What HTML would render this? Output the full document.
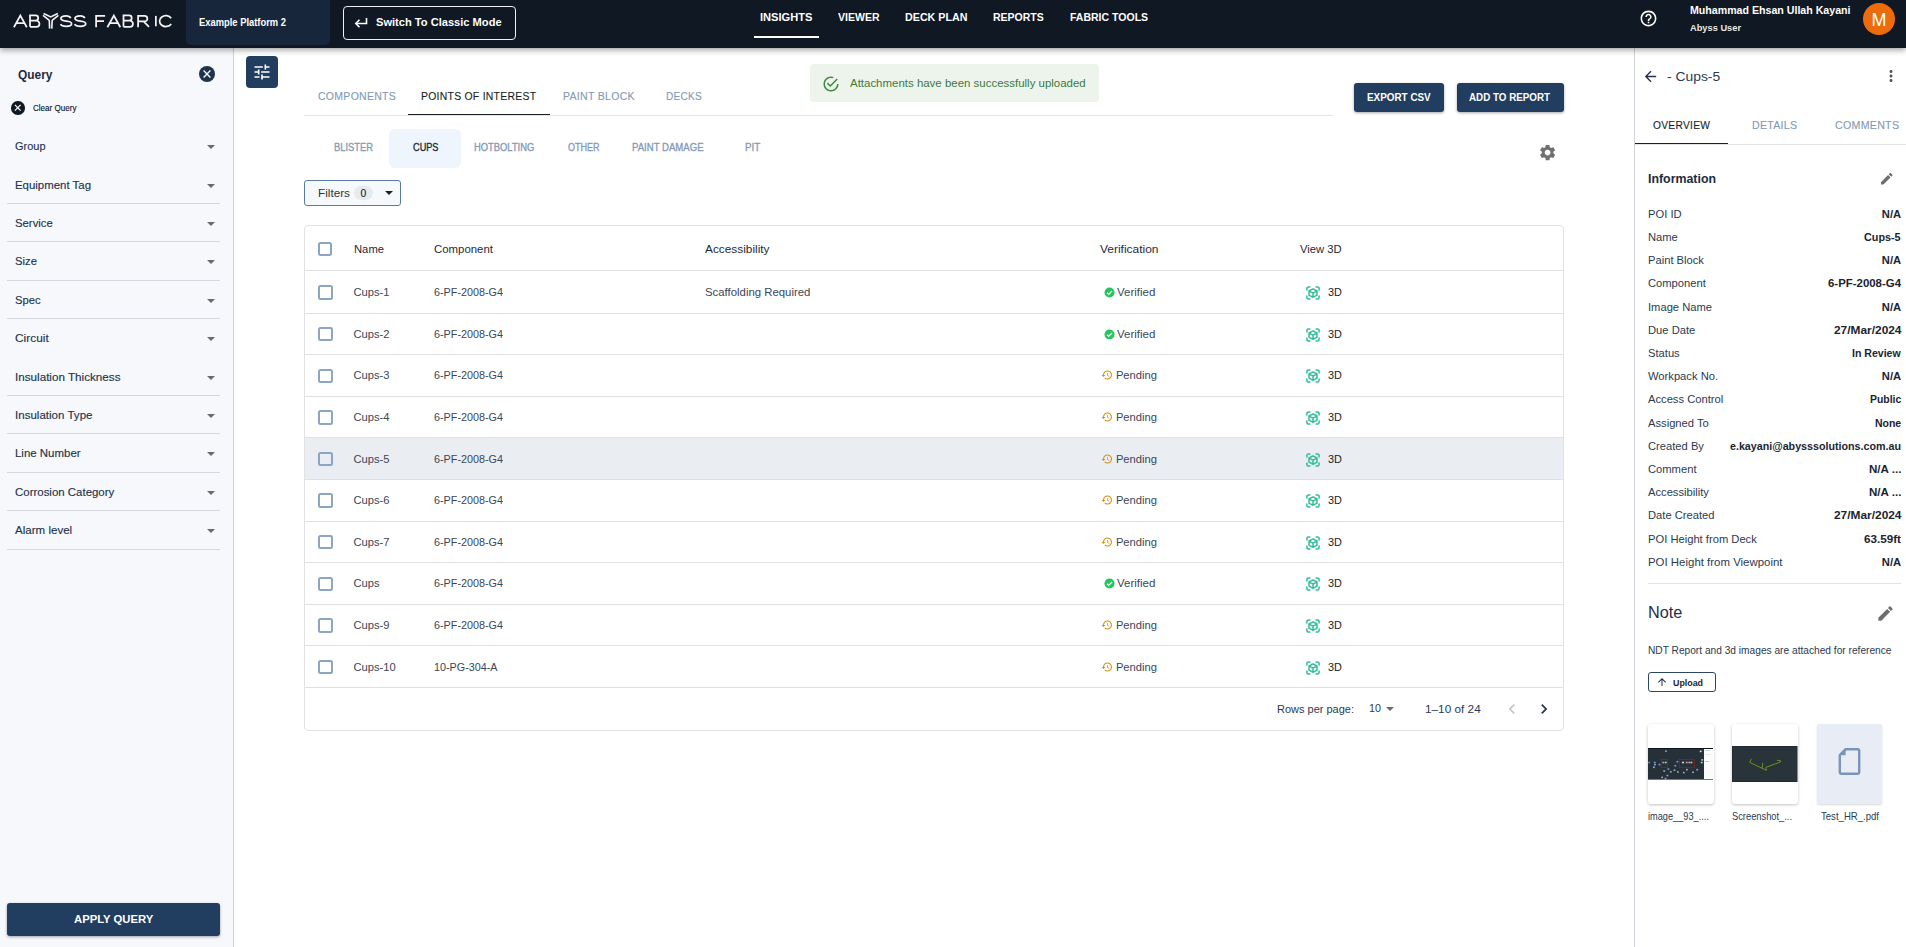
<!DOCTYPE html>
<html><head><meta charset="utf-8"><title>Abyss Fabric</title>
<style>
*{box-sizing:border-box;margin:0;padding:0}
html,body{width:1906px;height:947px;overflow:hidden;background:#fff;font-family:"Liberation Sans",sans-serif;position:relative}
.a{position:absolute;white-space:nowrap}
.b{position:absolute}
.cb{position:absolute;width:14.4px;height:14.4px;border:2px solid #8ca5c5;border-radius:2.5px;background:transparent}
.dd{position:absolute;width:0;height:0;border-left:4px solid transparent;border-right:4px solid transparent;border-top:4px solid #6b6b6b}
.hl{position:absolute;height:1px;background:#e0e0e0}

</style></head><body>
<div class='b' style='left:0;top:0;width:1906px;height:48px;background:#101823;box-shadow:0 2px 6px rgba(0,0,0,.38);z-index:1'></div>
<div class='b' style='left:186px;top:0;width:144px;height:45px;background:#18263b;border-radius:0 0 5px 5px;z-index:2'></div>
<div class='b' style='left:343px;top:5.5px;width:173px;height:34px;border:1.3px solid #f0f0f0;border-radius:4px;z-index:2'></div>
<div class='b' style='left:754px;top:36px;width:65px;height:2px;background:#fff;z-index:2'></div>
<div class='b' style='left:1863px;top:3px;width:32px;height:32px;border-radius:50%;background:#ec6c0c;z-index:2'></div>
<svg class='b' style='left:1639px;top:9px;z-index:2' width='19' height='19' viewBox='0 0 24 24'><path fill='#fff' d='M11 18h2v-2h-2v2zm1-16C6.48 2 2 6.48 2 12s4.48 10 10 10 10-4.48 10-10S17.52 2 12 2zm0 18c-4.41 0-8-3.59-8-8s3.59-8 8-8 8 3.59 8 8-3.59 8-8 8zm0-14c-2.21 0-4 1.79-4 4h2c0-1.1.9-2 2-2s2 .9 2 2c0 2-3 1.75-3 5h2c0-2.25 3-2.5 3-5 0-2.21-1.79-4-4-4z'/></svg>
<svg class='b' style='left:354px;top:17px;z-index:2' width='14' height='11' viewBox='0 0 14 11'><path d='M12.5 1v5.5H2.5' fill='none' stroke='#fff' stroke-width='1.6'/><path d='M5.5 2.8L1.8 6.5l3.7 3.7' fill='none' stroke='#fff' stroke-width='1.6'/></svg>
<svg class='b' style='left:0;top:0;z-index:3' width='180' height='40' viewBox='0 0 180 40'><g fill='none' stroke='#f4f4f4' stroke-width='1.75' stroke-linejoin='miter'><path d='M13.9 27.2L20.35 15.6L26.8 27.2M16.6 23.1H24.1'/><path d='M30 27.2V15.9H35.6A2.6 2.6 0 0 1 35.6 21.1H30M35.6 21.1H36.4A3.05 3.05 0 0 1 36.4 27.2H30' transform='translate(0 -0.45)'/><path d='M70.8 18C70 16.6 68.4 15.9 66.2 15.9C62.8 15.9 60.9 17 60.9 18.6C60.9 20.4 62.8 20.8 66.2 21.1C69.8 21.4 71.6 22 71.6 23.7C71.6 25.4 69.6 26.3 66.2 26.3C63 26.3 61.3 25.6 60.6 24.2'/><path d='M84.9 18C84.1 16.6 82.5 15.9 80.3 15.9C76.9 15.9 75 17 75 18.6C75 20.4 76.9 20.8 80.3 21.1C83.9 21.4 85.7 22 85.7 23.7C85.7 25.4 83.7 26.3 80.3 26.3C77.1 26.3 75.4 25.6 74.7 24.2'/><path d='M96.1 27.2V15.9H105.1M96.1 21.2H104'/><path d='M107.4 27.2L113.85 15.6L120.3 27.2M110.1 23.1H117.6'/><path d='M123.5 27.2V15.9H129.1A2.6 2.6 0 0 1 129.1 21.1H123.5M129.1 21.1H129.9A3.05 3.05 0 0 1 129.9 27.2H123.5' transform='translate(0 -0.45)'/><path d='M138.1 27.2V15.9H144.6A2.75 2.75 0 0 1 144.6 21.4H138.1M143.6 21.4L149 26.8'/><path d='M155.85 15.9V26.3'/><path d='M171.2 18.2A6.3 5.45 0 1 0 171.2 24'/><path d='M43.6 13.5L50.7 16.9L57.8 13.5' stroke-width='1.6'/><path d='M43 15.4L48.7 19.9Q49.3 20.4 49.3 21.3L49.6 28.6' stroke-width='1.6'/><path d='M58.4 15.4L52.7 19.9Q52.1 20.4 52.1 21.3L51.8 28.6' stroke-width='1.6'/></g></svg>
<div class='b' style='left:0;top:48px;width:233px;height:899px;background:#f6f8fc'></div>
<div class='b' style='left:233px;top:48px;width:1px;height:899px;background:#cfd2d7'></div>
<div class='b' style='left:198.6px;top:66.4px;width:16.1px;height:16.1px;border-radius:50%;background:#1f3350'></div>
<svg class='b' style='left:198.6px;top:66.4px' width='16' height='16' viewBox='0 0 16 16'><path d='M4.6 4.6l6.8 6.8M11.4 4.6l-6.8 6.8' stroke='#fff' stroke-width='1.35'/></svg>
<div class='b' style='left:11.3px;top:101px;width:13.5px;height:13.5px;border-radius:50%;background:#111a24'></div>
<svg class='b' style='left:11.3px;top:101px' width='13.5' height='13.5' viewBox='0 0 16 16'><path d='M4.6 4.6l6.8 6.8M11.4 4.6l-6.8 6.8' stroke='#fff' stroke-width='1.45'/></svg>
<div class='dd' style='left:206.5px;top:144.5px'></div>
<div class='dd' style='left:206.5px;top:183.5px'></div>
<div class='dd' style='left:206.5px;top:221.5px'></div>
<div class='dd' style='left:206.5px;top:259.5px'></div>
<div class='dd' style='left:206.5px;top:298.5px'></div>
<div class='dd' style='left:206.5px;top:336.5px'></div>
<div class='dd' style='left:206.5px;top:375.5px'></div>
<div class='dd' style='left:206.5px;top:413.5px'></div>
<div class='dd' style='left:206.5px;top:451.5px'></div>
<div class='dd' style='left:206.5px;top:490.5px'></div>
<div class='dd' style='left:206.5px;top:528.5px'></div>
<div class='b' style='left:7px;top:203px;width:213px;height:1px;background:#d5d9df'></div>
<div class='b' style='left:7px;top:241px;width:213px;height:1px;background:#d5d9df'></div>
<div class='b' style='left:7px;top:280px;width:213px;height:1px;background:#d5d9df'></div>
<div class='b' style='left:7px;top:318px;width:213px;height:1px;background:#d5d9df'></div>
<div class='b' style='left:7px;top:395px;width:213px;height:1px;background:#d5d9df'></div>
<div class='b' style='left:7px;top:433px;width:213px;height:1px;background:#d5d9df'></div>
<div class='b' style='left:7px;top:472px;width:213px;height:1px;background:#d5d9df'></div>
<div class='b' style='left:7px;top:510px;width:213px;height:1px;background:#d5d9df'></div>
<div class='b' style='left:7px;top:549px;width:213px;height:1px;background:#d5d9df'></div>
<div class='b' style='left:7px;top:903px;width:213px;height:33px;background:#213d5f;border-radius:3px;box-shadow:0 1px 3px rgba(0,0,0,.35)'></div>
<div class='b' style='left:246px;top:56px;width:32px;height:32px;background:#213d5f;border-radius:4px'></div>
<svg class='b' style='left:252px;top:62px' width='20' height='20' viewBox='0 0 24 24'><path fill='#fff' d='M3 17v2h6v-2H3zM3 5v2h10V5H3zm10 16v-2h8v-2h-8v-2h-2v6h2zM7 9v2H3v2h4v2h2V9H7zm14 4v-2H11v2h10zm-6-4h2V7h4V5h-4V3h-2v6z'/></svg>
<div class='b' style='left:304px;top:115px;width:1029px;height:1px;background:#e2e4e7'></div>
<div class='b' style='left:408px;top:113.5px;width:142px;height:1.6px;background:#1a1f26'></div>
<div class='b' style='left:389px;top:129px;width:72px;height:39px;background:#eef5fc;border-radius:6px'></div>
<div class='b' style='left:304px;top:180px;width:97px;height:26px;border:1px solid #5b7aa0;border-radius:3px;background:#f6f9fc'></div>
<div class='b' style='left:354px;top:186px;width:19px;height:14px;border-radius:7px;background:#e6ebf1'></div>
<div class='dd' style='left:384.5px;top:190.5px;border-top-color:#222'></div>
<div class='b' style='left:809.5px;top:64px;width:289px;height:38px;background:#edf4ec;border-radius:4px'></div>
<svg class='b' style='left:822px;top:75px' width='18' height='18' viewBox='0 0 24 24'><path fill='#3b8a3f' d='M20 12c0 4.41-3.59 8-8 8s-8-3.59-8-8 3.59-8 8-8c.76 0 1.5.11 2.2.31l1.57-1.57C14.61 2.26 13.34 2 12 2 6.48 2 2 6.48 2 12s4.48 10 10 10 10-4.48 10-10h-2zM7.91 10.08 6.5 11.5 11 16 21 6l-1.41-1.42L11 13.17l-3.09-3.09z'/></svg>
<div class='b' style='left:1354px;top:83px;width:90px;height:28.5px;background:#213d5f;border-radius:3px;box-shadow:0 1px 3px rgba(0,0,0,.35)'></div>
<div class='b' style='left:1457px;top:83px;width:107px;height:28.5px;background:#213d5f;border-radius:3px;box-shadow:0 1px 3px rgba(0,0,0,.35)'></div>
<svg class='b' style='left:1538px;top:142.8px' width='19.2' height='19.2' viewBox='0 0 24 24'><path fill='#707070' d='M19.14 12.94c.04-.3.06-.61.06-.94 0-.32-.02-.64-.07-.94l2.03-1.58c.18-.14.23-.41.12-.61l-1.92-3.32c-.12-.22-.37-.29-.59-.22l-2.39.96c-.5-.38-1.03-.7-1.62-.94l-.36-2.54c-.04-.24-.24-.41-.48-.41h-3.84c-.24 0-.43.17-.47.41l-.36 2.54c-.59.24-1.13.57-1.62.94l-2.39-.96c-.22-.08-.47 0-.59.22L2.74 8.87c-.12.21-.08.47.12.61l2.03 1.58c-.05.3-.09.63-.09.94s.02.64.07.94l-2.03 1.58c-.18.14-.23.41-.12.61l1.92 3.32c.12.22.37.29.59.22l2.39-.96c.5.38 1.03.7 1.62.94l.36 2.54c.05.24.24.41.48.41h3.84c.24 0 .44-.17.47-.41l.36-2.54c.59-.24 1.13-.56 1.62-.94l2.39.96c.22.08.47 0 .59-.22l1.92-3.32c.12-.22.07-.47-.12-.61l-2.01-1.58zM12 15.6c-1.98 0-3.6-1.62-3.6-3.6s1.62-3.6 3.6-3.6 3.6 1.62 3.6 3.6-1.62 3.6-3.6 3.6z'/></svg>
<div class='b' style='left:304px;top:225px;width:1260px;height:506px;border:1px solid #e0e2e5;border-radius:4px'></div>
<div class='hl' style='left:305px;top:270px;width:1258px'></div>
<div class='cb' style='left:318px;top:241.5px'></div>
<div class='hl' style='left:305px;top:313px;width:1258px'></div>
<div class='cb' style='left:318.3px;top:285.4px'></div>
<svg class='b' style='left:1103.5px;top:287.0px' width='11' height='11' viewBox='0 0 24 24'><circle cx='12' cy='12' r='11' fill='#22c55e'/><path d='M6.5 12.5l3.7 3.6 7.3-7.4' fill='none' stroke='#fff' stroke-width='3'/></svg>
<svg class='b' style='left:1306px;top:286.2px' width='14' height='14' viewBox='0 0 14 14'><g fill='none' stroke='#30bf98' stroke-width='1.5' stroke-linecap='round' stroke-linejoin='round'><path d='M0.9 3.9V2.6A1.7 1.7 0 0 1 2.6 0.9H3.9M10.1 0.9H11.4A1.7 1.7 0 0 1 13.1 2.6V3.9M13.1 10.1V11.4A1.7 1.7 0 0 1 11.4 13.1H10.1M3.9 13.1H2.6A1.7 1.7 0 0 1 0.9 11.4V10.1'/><path d='M7 2.8L11 5v4.2L7 11.3 3 9.2V5z M3.2 5.1L7 7.2l3.8-2.1 M7 7.2v4'/></g></svg>
<div class='hl' style='left:305px;top:354px;width:1258px'></div>
<div class='cb' style='left:318.3px;top:327.0px'></div>
<svg class='b' style='left:1103.5px;top:328.6px' width='11' height='11' viewBox='0 0 24 24'><circle cx='12' cy='12' r='11' fill='#22c55e'/><path d='M6.5 12.5l3.7 3.6 7.3-7.4' fill='none' stroke='#fff' stroke-width='3'/></svg>
<svg class='b' style='left:1306px;top:327.8px' width='14' height='14' viewBox='0 0 14 14'><g fill='none' stroke='#30bf98' stroke-width='1.5' stroke-linecap='round' stroke-linejoin='round'><path d='M0.9 3.9V2.6A1.7 1.7 0 0 1 2.6 0.9H3.9M10.1 0.9H11.4A1.7 1.7 0 0 1 13.1 2.6V3.9M13.1 10.1V11.4A1.7 1.7 0 0 1 11.4 13.1H10.1M3.9 13.1H2.6A1.7 1.7 0 0 1 0.9 11.4V10.1'/><path d='M7 2.8L11 5v4.2L7 11.3 3 9.2V5z M3.2 5.1L7 7.2l3.8-2.1 M7 7.2v4'/></g></svg>
<div class='hl' style='left:305px;top:396px;width:1258px'></div>
<div class='cb' style='left:318.3px;top:368.6px'></div>
<svg class='b' style='left:1100.8px;top:369.4px' width='12' height='12' viewBox='0 0 24 24'><path fill='#d4900e' d='M13 3a9 9 0 0 0-9 9H1l3.89 3.89.07.14L9 12H6c0-3.87 3.13-7 7-7s7 3.13 7 7-3.13 7-7 7c-1.930 0-3.68-.79-4.94-2.06l-1.42 1.42A8.954 8.954 0 0 0 13 21a9 9 0 0 0 0-18zm-1 5v5l4.28 2.54.72-1.21-3.5-2.08V8H12z'/></svg>
<svg class='b' style='left:1306px;top:369.4px' width='14' height='14' viewBox='0 0 14 14'><g fill='none' stroke='#30bf98' stroke-width='1.5' stroke-linecap='round' stroke-linejoin='round'><path d='M0.9 3.9V2.6A1.7 1.7 0 0 1 2.6 0.9H3.9M10.1 0.9H11.4A1.7 1.7 0 0 1 13.1 2.6V3.9M13.1 10.1V11.4A1.7 1.7 0 0 1 11.4 13.1H10.1M3.9 13.1H2.6A1.7 1.7 0 0 1 0.9 11.4V10.1'/><path d='M7 2.8L11 5v4.2L7 11.3 3 9.2V5z M3.2 5.1L7 7.2l3.8-2.1 M7 7.2v4'/></g></svg>
<div class='hl' style='left:305px;top:437px;width:1258px'></div>
<div class='cb' style='left:318.3px;top:410.2px'></div>
<svg class='b' style='left:1100.8px;top:411.0px' width='12' height='12' viewBox='0 0 24 24'><path fill='#d4900e' d='M13 3a9 9 0 0 0-9 9H1l3.89 3.89.07.14L9 12H6c0-3.87 3.13-7 7-7s7 3.13 7 7-3.13 7-7 7c-1.930 0-3.68-.79-4.94-2.06l-1.42 1.42A8.954 8.954 0 0 0 13 21a9 9 0 0 0 0-18zm-1 5v5l4.28 2.54.72-1.21-3.5-2.08V8H12z'/></svg>
<svg class='b' style='left:1306px;top:411.0px' width='14' height='14' viewBox='0 0 14 14'><g fill='none' stroke='#30bf98' stroke-width='1.5' stroke-linecap='round' stroke-linejoin='round'><path d='M0.9 3.9V2.6A1.7 1.7 0 0 1 2.6 0.9H3.9M10.1 0.9H11.4A1.7 1.7 0 0 1 13.1 2.6V3.9M13.1 10.1V11.4A1.7 1.7 0 0 1 11.4 13.1H10.1M3.9 13.1H2.6A1.7 1.7 0 0 1 0.9 11.4V10.1'/><path d='M7 2.8L11 5v4.2L7 11.3 3 9.2V5z M3.2 5.1L7 7.2l3.8-2.1 M7 7.2v4'/></g></svg>
<div class='b' style='left:305px;top:438px;width:1258px;height:41px;background:#eaedf2'></div>
<div class='hl' style='left:305px;top:479px;width:1258px'></div>
<div class='cb' style='left:318.3px;top:451.8px'></div>
<svg class='b' style='left:1100.8px;top:452.6px' width='12' height='12' viewBox='0 0 24 24'><path fill='#d4900e' d='M13 3a9 9 0 0 0-9 9H1l3.89 3.89.07.14L9 12H6c0-3.87 3.13-7 7-7s7 3.13 7 7-3.13 7-7 7c-1.930 0-3.68-.79-4.94-2.06l-1.42 1.42A8.954 8.954 0 0 0 13 21a9 9 0 0 0 0-18zm-1 5v5l4.28 2.54.72-1.21-3.5-2.08V8H12z'/></svg>
<svg class='b' style='left:1306px;top:452.6px' width='14' height='14' viewBox='0 0 14 14'><g fill='none' stroke='#30bf98' stroke-width='1.5' stroke-linecap='round' stroke-linejoin='round'><path d='M0.9 3.9V2.6A1.7 1.7 0 0 1 2.6 0.9H3.9M10.1 0.9H11.4A1.7 1.7 0 0 1 13.1 2.6V3.9M13.1 10.1V11.4A1.7 1.7 0 0 1 11.4 13.1H10.1M3.9 13.1H2.6A1.7 1.7 0 0 1 0.9 11.4V10.1'/><path d='M7 2.8L11 5v4.2L7 11.3 3 9.2V5z M3.2 5.1L7 7.2l3.8-2.1 M7 7.2v4'/></g></svg>
<div class='hl' style='left:305px;top:521px;width:1258px'></div>
<div class='cb' style='left:318.3px;top:493.4px'></div>
<svg class='b' style='left:1100.8px;top:494.2px' width='12' height='12' viewBox='0 0 24 24'><path fill='#d4900e' d='M13 3a9 9 0 0 0-9 9H1l3.89 3.89.07.14L9 12H6c0-3.87 3.13-7 7-7s7 3.13 7 7-3.13 7-7 7c-1.930 0-3.68-.79-4.94-2.06l-1.42 1.42A8.954 8.954 0 0 0 13 21a9 9 0 0 0 0-18zm-1 5v5l4.28 2.54.72-1.21-3.5-2.08V8H12z'/></svg>
<svg class='b' style='left:1306px;top:494.2px' width='14' height='14' viewBox='0 0 14 14'><g fill='none' stroke='#30bf98' stroke-width='1.5' stroke-linecap='round' stroke-linejoin='round'><path d='M0.9 3.9V2.6A1.7 1.7 0 0 1 2.6 0.9H3.9M10.1 0.9H11.4A1.7 1.7 0 0 1 13.1 2.6V3.9M13.1 10.1V11.4A1.7 1.7 0 0 1 11.4 13.1H10.1M3.9 13.1H2.6A1.7 1.7 0 0 1 0.9 11.4V10.1'/><path d='M7 2.8L11 5v4.2L7 11.3 3 9.2V5z M3.2 5.1L7 7.2l3.8-2.1 M7 7.2v4'/></g></svg>
<div class='hl' style='left:305px;top:562px;width:1258px'></div>
<div class='cb' style='left:318.3px;top:535.0px'></div>
<svg class='b' style='left:1100.8px;top:535.8px' width='12' height='12' viewBox='0 0 24 24'><path fill='#d4900e' d='M13 3a9 9 0 0 0-9 9H1l3.89 3.89.07.14L9 12H6c0-3.87 3.13-7 7-7s7 3.13 7 7-3.13 7-7 7c-1.930 0-3.68-.79-4.94-2.06l-1.42 1.42A8.954 8.954 0 0 0 13 21a9 9 0 0 0 0-18zm-1 5v5l4.28 2.54.72-1.21-3.5-2.08V8H12z'/></svg>
<svg class='b' style='left:1306px;top:535.8px' width='14' height='14' viewBox='0 0 14 14'><g fill='none' stroke='#30bf98' stroke-width='1.5' stroke-linecap='round' stroke-linejoin='round'><path d='M0.9 3.9V2.6A1.7 1.7 0 0 1 2.6 0.9H3.9M10.1 0.9H11.4A1.7 1.7 0 0 1 13.1 2.6V3.9M13.1 10.1V11.4A1.7 1.7 0 0 1 11.4 13.1H10.1M3.9 13.1H2.6A1.7 1.7 0 0 1 0.9 11.4V10.1'/><path d='M7 2.8L11 5v4.2L7 11.3 3 9.2V5z M3.2 5.1L7 7.2l3.8-2.1 M7 7.2v4'/></g></svg>
<div class='hl' style='left:305px;top:604px;width:1258px'></div>
<div class='cb' style='left:318.3px;top:576.6px'></div>
<svg class='b' style='left:1103.5px;top:578.2px' width='11' height='11' viewBox='0 0 24 24'><circle cx='12' cy='12' r='11' fill='#22c55e'/><path d='M6.5 12.5l3.7 3.6 7.3-7.4' fill='none' stroke='#fff' stroke-width='3'/></svg>
<svg class='b' style='left:1306px;top:577.4px' width='14' height='14' viewBox='0 0 14 14'><g fill='none' stroke='#30bf98' stroke-width='1.5' stroke-linecap='round' stroke-linejoin='round'><path d='M0.9 3.9V2.6A1.7 1.7 0 0 1 2.6 0.9H3.9M10.1 0.9H11.4A1.7 1.7 0 0 1 13.1 2.6V3.9M13.1 10.1V11.4A1.7 1.7 0 0 1 11.4 13.1H10.1M3.9 13.1H2.6A1.7 1.7 0 0 1 0.9 11.4V10.1'/><path d='M7 2.8L11 5v4.2L7 11.3 3 9.2V5z M3.2 5.1L7 7.2l3.8-2.1 M7 7.2v4'/></g></svg>
<div class='hl' style='left:305px;top:645px;width:1258px'></div>
<div class='cb' style='left:318.3px;top:618.2px'></div>
<svg class='b' style='left:1100.8px;top:619.0px' width='12' height='12' viewBox='0 0 24 24'><path fill='#d4900e' d='M13 3a9 9 0 0 0-9 9H1l3.89 3.89.07.14L9 12H6c0-3.87 3.13-7 7-7s7 3.13 7 7-3.13 7-7 7c-1.930 0-3.68-.79-4.94-2.06l-1.42 1.42A8.954 8.954 0 0 0 13 21a9 9 0 0 0 0-18zm-1 5v5l4.28 2.54.72-1.21-3.5-2.08V8H12z'/></svg>
<svg class='b' style='left:1306px;top:619.0px' width='14' height='14' viewBox='0 0 14 14'><g fill='none' stroke='#30bf98' stroke-width='1.5' stroke-linecap='round' stroke-linejoin='round'><path d='M0.9 3.9V2.6A1.7 1.7 0 0 1 2.6 0.9H3.9M10.1 0.9H11.4A1.7 1.7 0 0 1 13.1 2.6V3.9M13.1 10.1V11.4A1.7 1.7 0 0 1 11.4 13.1H10.1M3.9 13.1H2.6A1.7 1.7 0 0 1 0.9 11.4V10.1'/><path d='M7 2.8L11 5v4.2L7 11.3 3 9.2V5z M3.2 5.1L7 7.2l3.8-2.1 M7 7.2v4'/></g></svg>
<div class='hl' style='left:305px;top:687px;width:1258px'></div>
<div class='cb' style='left:318.3px;top:659.8px'></div>
<svg class='b' style='left:1100.8px;top:660.6px' width='12' height='12' viewBox='0 0 24 24'><path fill='#d4900e' d='M13 3a9 9 0 0 0-9 9H1l3.89 3.89.07.14L9 12H6c0-3.87 3.13-7 7-7s7 3.13 7 7-3.13 7-7 7c-1.930 0-3.68-.79-4.94-2.06l-1.42 1.42A8.954 8.954 0 0 0 13 21a9 9 0 0 0 0-18zm-1 5v5l4.28 2.54.72-1.21-3.5-2.08V8H12z'/></svg>
<svg class='b' style='left:1306px;top:660.6px' width='14' height='14' viewBox='0 0 14 14'><g fill='none' stroke='#30bf98' stroke-width='1.5' stroke-linecap='round' stroke-linejoin='round'><path d='M0.9 3.9V2.6A1.7 1.7 0 0 1 2.6 0.9H3.9M10.1 0.9H11.4A1.7 1.7 0 0 1 13.1 2.6V3.9M13.1 10.1V11.4A1.7 1.7 0 0 1 11.4 13.1H10.1M3.9 13.1H2.6A1.7 1.7 0 0 1 0.9 11.4V10.1'/><path d='M7 2.8L11 5v4.2L7 11.3 3 9.2V5z M3.2 5.1L7 7.2l3.8-2.1 M7 7.2v4'/></g></svg>
<div class='dd' style='left:1385.5px;top:707px'></div>
<svg class='b' style='left:1502.3px;top:698.8px' width='20' height='20' viewBox='0 0 24 24'><path fill='#c2c7ce' d='M15.41 7.41 14 6l-6 6 6 6 1.41-1.41L10.83 12z'/></svg>
<svg class='b' style='left:1534.3px;top:698.8px' width='20' height='20' viewBox='0 0 24 24'><path fill='#22344d' d='M10 6 8.59 7.41 13.17 12l-4.58 4.59L10 18l6-6z'/></svg>
<div class='b' style='left:1634px;top:48px;width:1px;height:899px;background:#cfd2d7'></div>
<svg class='b' style='left:1642px;top:68px' width='17' height='17' viewBox='0 0 24 24'><path fill='#22344d' d='M20 11H7.83l5.59-5.59L12 4l-8 8 8 8 1.41-1.41L7.83 13H20v-2z'/></svg>
<svg class='b' style='left:1882px;top:67px' width='18' height='18' viewBox='0 0 24 24'><path fill='#555' d='M12 8c1.1 0 2-.9 2-2s-.9-2-2-2-2 .9-2 2 .9 2 2 2zm0 2c-1.1 0-2 .9-2 2s.9 2 2 2 2-.9 2-2-.9-2-2-2zm0 6c-1.1 0-2 .9-2 2s.9 2 2 2 2-.9 2-2-.9-2-2-2z'/></svg>
<div class='b' style='left:1635px;top:143.5px;width:271px;height:1px;background:#e2e4e7'></div>
<div class='b' style='left:1635px;top:142.6px;width:93px;height:1.6px;background:#1a1f26'></div>
<svg class='b' style='left:1878.5px;top:171px' width='15.5' height='15.5' viewBox='0 0 24 24'><path fill='#6b6d70' d='M3 17.25V21h3.75L17.81 9.94l-3.75-3.75L3 17.25zM20.71 7.04a.996.996 0 0 0 0-1.41l-2.34-2.34a.996.996 0 0 0-1.41 0l-1.83 1.83 3.75 3.75 1.83-1.83z'/></svg>
<div class='b' style='left:1648px;top:583px;width:253px;height:1px;background:#e0e2e5'></div>
<svg class='b' style='left:1876px;top:604px' width='19' height='19' viewBox='0 0 24 24'><path fill='#6b6d70' d='M3 17.25V21h3.75L17.81 9.94l-3.75-3.75L3 17.25zM20.71 7.04a.996.996 0 0 0 0-1.41l-2.34-2.34a.996.996 0 0 0-1.41 0l-1.83 1.83 3.75 3.75 1.83-1.83z'/></svg>
<div class='b' style='left:1648px;top:672px;width:68px;height:20px;border:1.3px solid #2b4566;border-radius:3px'></div>
<svg class='b' style='left:1656px;top:676px' width='12' height='12' viewBox='0 0 24 24'><path fill='#22344d' d='M4 12l1.41 1.41L11 7.83V20h2V7.83l5.58 5.59L20 12l-8-8-8 8z'/></svg>
<div class='b' style='left:1648px;top:724px;width:65.5px;height:80px;background:#fff;border-radius:3px;box-shadow:0 1px 3px rgba(0,0,0,.25)'></div>
<div class='b' style='left:1732px;top:724px;width:65.5px;height:80px;background:#fff;border-radius:3px;box-shadow:0 1px 3px rgba(0,0,0,.25)'></div>
<div class='b' style='left:1817px;top:724px;width:65px;height:80px;background:#e8edf5;border-radius:2px;box-shadow:0 1px 2px rgba(0,0,0,.15)'></div>
<svg class='b' style='left:1648px;top:748px' width='65' height='32' viewBox='0 0 65 32'><rect width='65' height='32' fill='#263039'/><rect width='65' height='1' fill='#0d141c'/><rect x='56' y='1' width='9' height='30' fill='#fbfbfb'/><rect x='57' y='2' width='5' height='0.8' fill='#ccc'/><rect x='57' y='6' width='6' height='0.6' fill='#ddd'/><rect x='57' y='13' width='4' height='0.8' fill='#bbb'/><rect y='31' width='65' height='1' fill='#777'/><rect x='13.6' y='11.4' width='6.1' height='8.1' fill='none' stroke='#a02020' stroke-width='0.6'/><rect x='31.3' y='11.4' width='15' height='8.4' fill='none' stroke='#a02020' stroke-width='0.6'/><rect x='17.1' y='2.4' width='1.8' height='1.6' fill='#7f9bd0'/><rect x='0.3' y='13.7' width='1.8' height='1.6' fill='#6d8cc8'/><rect x='5.8' y='13.7' width='1.8' height='1.6' fill='#7f9bd0'/><rect x='6.1' y='15.8' width='1.8' height='1.6' fill='#8fa6d6'/><rect x='10.6' y='15.8' width='1.8' height='1.6' fill='#7f9bd0'/><rect x='5.0' y='18.5' width='1.8' height='1.6' fill='#8fa6d6'/><rect x='15.3' y='22.2' width='1.8' height='1.6' fill='#8fa6d6'/><rect x='19.5' y='20.3' width='1.8' height='1.6' fill='#7f9bd0'/><rect x='21.9' y='23.0' width='1.8' height='1.6' fill='#7cc06a'/><rect x='25.6' y='21.4' width='1.8' height='1.6' fill='#8fa6d6'/><rect x='26.4' y='16.9' width='1.8' height='1.6' fill='#7f9bd0'/><rect x='28.5' y='12.9' width='1.8' height='1.6' fill='#7f9bd0'/><rect x='29.0' y='23.2' width='1.8' height='1.6' fill='#7cc06a'/><rect x='34.9' y='23.8' width='1.8' height='1.6' fill='#8fa6d6'/><rect x='38.0' y='20.9' width='1.8' height='1.6' fill='#8fa6d6'/><rect x='44.1' y='23.5' width='1.8' height='1.6' fill='#8fa6d6'/><rect x='48.3' y='20.9' width='1.8' height='1.6' fill='#8fa6d6'/><rect x='51.8' y='2.6' width='1.8' height='1.6' fill='#d8dde5'/><rect x='53.3' y='11.1' width='1.8' height='1.6' fill='#9fd0c0'/><rect x='52.8' y='13.7' width='1.8' height='1.6' fill='#c8ced8'/><rect x='18.5' y='26.7' width='1.8' height='1.6' fill='#8fa6d6'/><rect x='13.2' y='28.5' width='1.8' height='1.6' fill='#7f9bd0'/><rect x='16.6' y='29.8' width='1.8' height='1.6' fill='#7f9bd0'/><rect x='34.1' y='13.7' width='1.8' height='1.6' fill='#e8ecf2'/><rect x='37.8' y='13.7' width='1.8' height='1.6' fill='#e09a9a'/><rect x='40.4' y='13.7' width='1.8' height='1.6' fill='#e0a0a0'/><rect x='42.5' y='13.7' width='1.8' height='1.6' fill='#d8c0c0'/><rect x='14.5' y='13.7' width='1.8' height='1.6' fill='#e0a0a0'/><rect x='16.9' y='13.7' width='1.8' height='1.6' fill='#b0d0b0'/></svg>
<svg class='b' style='left:1732px;top:746px' width='65.5' height='36' viewBox='0 0 65.5 36'><rect width='65.5' height='36' fill='#1a232a'/><rect x='0.5' y='0.5' width='64.5' height='35' fill='#29333a'/><g fill='none' stroke='#6f9c1c' stroke-width='0.9' stroke-linecap='round'><path d='M19.1 13.2L17.8 16.4L34.4 24.3L33.9 21.4L48.2 16.1L48.7 14.8L45.3 14.3'/><path d='M30.7 17.2L30.2 22'/></g></svg>
<svg class='b' style='left:1837px;top:746.5px' width='25' height='29' viewBox='0 0 25 29'><path d='M8.6 2.2H20.6A1.6 1.6 0 0 1 22.2 3.8V25.2A1.6 1.6 0 0 1 20.6 26.8H4.4A1.6 1.6 0 0 1 2.8 25.2V8z' fill='none' stroke='#7a95ba' stroke-width='2.4' stroke-linejoin='round'/><path d='M2.8 8.2L8.6 2.2V8.2z' fill='#7a95ba'/></svg>
<div class='a' style='left:199.00px;top:18.00px;font-size:10.4px;line-height:10.4px;font-weight:700;color:#fff;transform:scaleX(0.9020);transform-origin:left top;z-index:3;'>Example Platform 2</div>
<div class='a' style='left:376.00px;top:17.00px;font-size:11.5px;line-height:11.5px;font-weight:700;color:#fff;transform:scaleX(0.9650);transform-origin:left top;z-index:3;'>Switch To Classic Mode</div>
<div class='a' style='left:759.70px;top:12.00px;font-size:11.2px;line-height:11.2px;font-weight:700;color:#fff;transform:scaleX(0.9935);transform-origin:left top;z-index:3;'>INSIGHTS</div>
<div class='a' style='left:837.80px;top:12.00px;font-size:11.2px;line-height:11.2px;font-weight:700;color:#fff;transform:scaleX(0.9402);transform-origin:left top;z-index:3;'>VIEWER</div>
<div class='a' style='left:905.00px;top:12.00px;font-size:11.2px;line-height:11.2px;font-weight:700;color:#fff;transform:scaleX(0.9576);transform-origin:left top;z-index:3;'>DECK PLAN</div>
<div class='a' style='left:993.00px;top:12.00px;font-size:11.2px;line-height:11.2px;font-weight:700;color:#fff;transform:scaleX(0.9373);transform-origin:left top;z-index:3;'>REPORTS</div>
<div class='a' style='left:1069.50px;top:12.00px;font-size:11.2px;line-height:11.2px;font-weight:700;color:#fff;transform:scaleX(0.9399);transform-origin:left top;z-index:3;'>FABRIC TOOLS</div>
<div class='a' style='left:1690.00px;top:5.00px;font-size:11.2px;line-height:11.2px;font-weight:700;color:#fff;transform:scaleX(0.9491);transform-origin:left top;z-index:3;'>Muhammad Ehsan Ullah Kayani</div>
<div class='a' style='left:1690.00px;top:23.00px;font-size:9.6px;line-height:9.6px;font-weight:700;color:#e9e9e9;transform:scaleX(0.9660);transform-origin:left top;z-index:3;'>Abyss User</div>
<div class='a' style='left:1871.50px;top:11.00px;font-size:18px;line-height:18px;font-weight:400;color:#fff;transform-origin:left top;z-index:3;'>M</div>
<div class='a' style='left:17.70px;top:69.00px;font-size:12.8px;line-height:12.8px;font-weight:700;color:#1c2b40;transform:scaleX(0.9324);transform-origin:left top;'>Query</div>
<div class='a' style='left:33.00px;top:104.00px;font-size:8.6px;line-height:8.6px;font-weight:400;color:#0a0f18;transform:scaleX(0.9390);transform-origin:left top;-webkit-text-stroke:0.12px currentColor;'>Clear Query</div>
<div class='a' style='left:15.00px;top:141.00px;font-size:11.2px;line-height:11.2px;font-weight:400;color:#22314a;transform:scaleX(0.9809);transform-origin:left top;-webkit-text-stroke:0.12px currentColor;'>Group</div>
<div class='a' style='left:15.00px;top:180.00px;font-size:11.2px;line-height:11.2px;font-weight:400;color:#22314a;transform:scaleX(1.0210);transform-origin:left top;-webkit-text-stroke:0.12px currentColor;'>Equipment Tag</div>
<div class='a' style='left:15.00px;top:218.00px;font-size:11.2px;line-height:11.2px;font-weight:400;color:#22314a;transform:scaleX(1.0131);transform-origin:left top;-webkit-text-stroke:0.12px currentColor;'>Service</div>
<div class='a' style='left:15.00px;top:256.00px;font-size:11.2px;line-height:11.2px;font-weight:400;color:#22314a;transform:scaleX(1.0062);transform-origin:left top;-webkit-text-stroke:0.12px currentColor;'>Size</div>
<div class='a' style='left:15.00px;top:295.00px;font-size:11.2px;line-height:11.2px;font-weight:400;color:#22314a;transform-origin:left top;-webkit-text-stroke:0.12px currentColor;'>Spec</div>
<div class='a' style='left:15.00px;top:333.00px;font-size:11.2px;line-height:11.2px;font-weight:400;color:#22314a;transform:scaleX(1.0630);transform-origin:left top;-webkit-text-stroke:0.12px currentColor;'>Circuit</div>
<div class='a' style='left:15.00px;top:372.00px;font-size:11.2px;line-height:11.2px;font-weight:400;color:#22314a;transform:scaleX(1.0428);transform-origin:left top;-webkit-text-stroke:0.12px currentColor;'>Insulation Thickness</div>
<div class='a' style='left:15.00px;top:410.00px;font-size:11.2px;line-height:11.2px;font-weight:400;color:#22314a;transform:scaleX(1.0325);transform-origin:left top;-webkit-text-stroke:0.12px currentColor;'>Insulation Type</div>
<div class='a' style='left:15.00px;top:448.00px;font-size:11.2px;line-height:11.2px;font-weight:400;color:#22314a;transform:scaleX(1.0240);transform-origin:left top;-webkit-text-stroke:0.12px currentColor;'>Line Number</div>
<div class='a' style='left:15.00px;top:487.00px;font-size:11.2px;line-height:11.2px;font-weight:400;color:#22314a;transform:scaleX(1.0235);transform-origin:left top;-webkit-text-stroke:0.12px currentColor;'>Corrosion Category</div>
<div class='a' style='left:15.00px;top:525.00px;font-size:11.2px;line-height:11.2px;font-weight:400;color:#22314a;transform:scaleX(1.0335);transform-origin:left top;-webkit-text-stroke:0.12px currentColor;'>Alarm level</div>
<div class='a' style='left:74.00px;top:914.00px;font-size:11.2px;line-height:11.2px;font-weight:700;color:#fff;transform:scaleX(1.0096);transform-origin:left top;'>APPLY QUERY</div>
<div class='a' style='left:317.50px;top:91.00px;font-size:11.2px;line-height:11.2px;font-weight:400;color:#8399b6;letter-spacing:0.3px;transform:scaleX(0.9386);transform-origin:left top;-webkit-text-stroke:0.12px currentColor;'>COMPONENTS</div>
<div class='a' style='left:421.40px;top:91.00px;font-size:11.2px;line-height:11.2px;font-weight:400;color:#1a1f26;letter-spacing:0.3px;transform:scaleX(0.9287);transform-origin:left top;-webkit-text-stroke:0.12px currentColor;'>POINTS OF INTEREST</div>
<div class='a' style='left:562.80px;top:91.00px;font-size:11.2px;line-height:11.2px;font-weight:400;color:#8399b6;letter-spacing:0.3px;transform:scaleX(0.9427);transform-origin:left top;-webkit-text-stroke:0.12px currentColor;'>PAINT BLOCK</div>
<div class='a' style='left:665.50px;top:91.00px;font-size:11.2px;line-height:11.2px;font-weight:400;color:#8399b6;letter-spacing:0.3px;transform:scaleX(0.8982);transform-origin:left top;-webkit-text-stroke:0.12px currentColor;'>DECKS</div>
<div class='a' style='left:333.80px;top:143.00px;font-size:10px;line-height:10px;font-weight:400;color:#8399b6;transform:scaleX(0.9331);transform-origin:left top;-webkit-text-stroke:0.3px currentColor;'>BLISTER</div>
<div class='a' style='left:412.50px;top:143.00px;font-size:10px;line-height:10px;font-weight:400;color:#1c2733;transform:scaleX(0.9174);transform-origin:left top;-webkit-text-stroke:0.3px currentColor;'>CUPS</div>
<div class='a' style='left:474.00px;top:143.00px;font-size:10px;line-height:10px;font-weight:400;color:#8399b6;transform:scaleX(0.9383);transform-origin:left top;-webkit-text-stroke:0.3px currentColor;'>HOTBOLTING</div>
<div class='a' style='left:567.50px;top:143.00px;font-size:10px;line-height:10px;font-weight:400;color:#8399b6;transform:scaleX(0.9000);transform-origin:left top;-webkit-text-stroke:0.3px currentColor;'>OTHER</div>
<div class='a' style='left:632.00px;top:143.00px;font-size:10px;line-height:10px;font-weight:400;color:#8399b6;transform:scaleX(0.9591);transform-origin:left top;-webkit-text-stroke:0.3px currentColor;'>PAINT DAMAGE</div>
<div class='a' style='left:744.80px;top:143.00px;font-size:10px;line-height:10px;font-weight:400;color:#8399b6;transform:scaleX(0.9767);transform-origin:left top;-webkit-text-stroke:0.3px currentColor;'>PIT</div>
<div class='a' style='left:318.30px;top:188.00px;font-size:11.2px;line-height:11.2px;font-weight:400;color:#333;transform:scaleX(1.0503);transform-origin:left top;'>Filters</div>
<div class='a' style='left:360.61px;top:189.00px;font-size:10.4px;line-height:10.4px;font-weight:400;color:#222;transform-origin:left top;-webkit-text-stroke:0.12px currentColor;'>0</div>
<div class='a' style='left:849.50px;top:78.00px;font-size:11.2px;line-height:11.2px;font-weight:400;color:#3c7a40;transform:scaleX(1.0243);transform-origin:left top;'>Attachments have been successfully uploaded</div>
<div class='a' style='left:1367.00px;top:93.00px;font-size:10.4px;line-height:10.4px;font-weight:700;color:#fff;transform:scaleX(0.9510);transform-origin:left top;'>EXPORT CSV</div>
<div class='a' style='left:1469.40px;top:93.00px;font-size:10.4px;line-height:10.4px;font-weight:700;color:#fff;transform:scaleX(0.9437);transform-origin:left top;'>ADD TO REPORT</div>
<div class='a' style='left:353.50px;top:244.00px;font-size:11.2px;line-height:11.2px;font-weight:400;color:#1f2a37;transform:scaleX(1.0052);transform-origin:left top;'>Name</div>
<div class='a' style='left:433.50px;top:244.00px;font-size:11.2px;line-height:11.2px;font-weight:400;color:#1f2a37;transform:scaleX(1.0183);transform-origin:left top;'>Component</div>
<div class='a' style='left:704.50px;top:244.00px;font-size:11.2px;line-height:11.2px;font-weight:400;color:#1f2a37;transform:scaleX(1.0585);transform-origin:left top;'>Accessibility</div>
<div class='a' style='left:1100.00px;top:244.00px;font-size:11.2px;line-height:11.2px;font-weight:400;color:#1f2a37;transform:scaleX(1.0688);transform-origin:left top;'>Verification</div>
<div class='a' style='left:1300.00px;top:244.00px;font-size:11.2px;line-height:11.2px;font-weight:400;color:#1f2a37;transform:scaleX(1.0056);transform-origin:left top;'>View 3D</div>
<div class='a' style='left:353.50px;top:287.00px;font-size:11.2px;line-height:11.2px;font-weight:400;color:#3a4757;transform-origin:left top;'>Cups-1</div>
<div class='a' style='left:433.50px;top:287.00px;font-size:11.2px;line-height:11.2px;font-weight:400;color:#3a4757;transform:scaleX(0.9648);transform-origin:left top;'>6-PF-2008-G4</div>
<div class='a' style='left:704.50px;top:287.00px;font-size:11.2px;line-height:11.2px;font-weight:400;color:#3a4757;transform:scaleX(1.0167);transform-origin:left top;'>Scaffolding Required</div>
<div class='a' style='left:1117.30px;top:287.00px;font-size:11.2px;line-height:11.2px;font-weight:400;color:#3a4757;transform:scaleX(1.0287);transform-origin:left top;'>Verified</div>
<div class='a' style='left:1327.60px;top:287.00px;font-size:11.2px;line-height:11.2px;font-weight:400;color:#222;transform:scaleX(0.9712);transform-origin:left top;'>3D</div>
<div class='a' style='left:353.50px;top:329.00px;font-size:11.2px;line-height:11.2px;font-weight:400;color:#3a4757;transform-origin:left top;'>Cups-2</div>
<div class='a' style='left:433.50px;top:329.00px;font-size:11.2px;line-height:11.2px;font-weight:400;color:#3a4757;transform:scaleX(0.9648);transform-origin:left top;'>6-PF-2008-G4</div>
<div class='a' style='left:1117.30px;top:329.00px;font-size:11.2px;line-height:11.2px;font-weight:400;color:#3a4757;transform:scaleX(1.0287);transform-origin:left top;'>Verified</div>
<div class='a' style='left:1327.60px;top:329.00px;font-size:11.2px;line-height:11.2px;font-weight:400;color:#222;transform:scaleX(0.9712);transform-origin:left top;'>3D</div>
<div class='a' style='left:353.50px;top:370.00px;font-size:11.2px;line-height:11.2px;font-weight:400;color:#3a4757;transform-origin:left top;'>Cups-3</div>
<div class='a' style='left:433.50px;top:370.00px;font-size:11.2px;line-height:11.2px;font-weight:400;color:#3a4757;transform:scaleX(0.9648);transform-origin:left top;'>6-PF-2008-G4</div>
<div class='a' style='left:1115.90px;top:370.00px;font-size:11.2px;line-height:11.2px;font-weight:400;color:#3a4757;transform-origin:left top;'>Pending</div>
<div class='a' style='left:1327.60px;top:370.00px;font-size:11.2px;line-height:11.2px;font-weight:400;color:#222;transform:scaleX(0.9712);transform-origin:left top;'>3D</div>
<div class='a' style='left:353.50px;top:412.00px;font-size:11.2px;line-height:11.2px;font-weight:400;color:#3a4757;transform-origin:left top;'>Cups-4</div>
<div class='a' style='left:433.50px;top:412.00px;font-size:11.2px;line-height:11.2px;font-weight:400;color:#3a4757;transform:scaleX(0.9648);transform-origin:left top;'>6-PF-2008-G4</div>
<div class='a' style='left:1115.90px;top:412.00px;font-size:11.2px;line-height:11.2px;font-weight:400;color:#3a4757;transform-origin:left top;'>Pending</div>
<div class='a' style='left:1327.60px;top:412.00px;font-size:11.2px;line-height:11.2px;font-weight:400;color:#222;transform:scaleX(0.9712);transform-origin:left top;'>3D</div>
<div class='a' style='left:353.50px;top:454.00px;font-size:11.2px;line-height:11.2px;font-weight:400;color:#3a4757;transform-origin:left top;'>Cups-5</div>
<div class='a' style='left:433.50px;top:454.00px;font-size:11.2px;line-height:11.2px;font-weight:400;color:#3a4757;transform:scaleX(0.9648);transform-origin:left top;'>6-PF-2008-G4</div>
<div class='a' style='left:1115.90px;top:454.00px;font-size:11.2px;line-height:11.2px;font-weight:400;color:#3a4757;transform-origin:left top;'>Pending</div>
<div class='a' style='left:1327.60px;top:454.00px;font-size:11.2px;line-height:11.2px;font-weight:400;color:#222;transform:scaleX(0.9712);transform-origin:left top;'>3D</div>
<div class='a' style='left:353.50px;top:495.00px;font-size:11.2px;line-height:11.2px;font-weight:400;color:#3a4757;transform-origin:left top;'>Cups-6</div>
<div class='a' style='left:433.50px;top:495.00px;font-size:11.2px;line-height:11.2px;font-weight:400;color:#3a4757;transform:scaleX(0.9648);transform-origin:left top;'>6-PF-2008-G4</div>
<div class='a' style='left:1115.90px;top:495.00px;font-size:11.2px;line-height:11.2px;font-weight:400;color:#3a4757;transform-origin:left top;'>Pending</div>
<div class='a' style='left:1327.60px;top:495.00px;font-size:11.2px;line-height:11.2px;font-weight:400;color:#222;transform:scaleX(0.9712);transform-origin:left top;'>3D</div>
<div class='a' style='left:353.50px;top:537.00px;font-size:11.2px;line-height:11.2px;font-weight:400;color:#3a4757;transform-origin:left top;'>Cups-7</div>
<div class='a' style='left:433.50px;top:537.00px;font-size:11.2px;line-height:11.2px;font-weight:400;color:#3a4757;transform:scaleX(0.9648);transform-origin:left top;'>6-PF-2008-G4</div>
<div class='a' style='left:1115.90px;top:537.00px;font-size:11.2px;line-height:11.2px;font-weight:400;color:#3a4757;transform-origin:left top;'>Pending</div>
<div class='a' style='left:1327.60px;top:537.00px;font-size:11.2px;line-height:11.2px;font-weight:400;color:#222;transform:scaleX(0.9712);transform-origin:left top;'>3D</div>
<div class='a' style='left:353.50px;top:578.00px;font-size:11.2px;line-height:11.2px;font-weight:400;color:#3a4757;transform-origin:left top;'>Cups</div>
<div class='a' style='left:433.50px;top:578.00px;font-size:11.2px;line-height:11.2px;font-weight:400;color:#3a4757;transform:scaleX(0.9648);transform-origin:left top;'>6-PF-2008-G4</div>
<div class='a' style='left:1117.30px;top:578.00px;font-size:11.2px;line-height:11.2px;font-weight:400;color:#3a4757;transform:scaleX(1.0287);transform-origin:left top;'>Verified</div>
<div class='a' style='left:1327.60px;top:578.00px;font-size:11.2px;line-height:11.2px;font-weight:400;color:#222;transform:scaleX(0.9712);transform-origin:left top;'>3D</div>
<div class='a' style='left:353.50px;top:620.00px;font-size:11.2px;line-height:11.2px;font-weight:400;color:#3a4757;transform-origin:left top;'>Cups-9</div>
<div class='a' style='left:433.50px;top:620.00px;font-size:11.2px;line-height:11.2px;font-weight:400;color:#3a4757;transform:scaleX(0.9648);transform-origin:left top;'>6-PF-2008-G4</div>
<div class='a' style='left:1115.90px;top:620.00px;font-size:11.2px;line-height:11.2px;font-weight:400;color:#3a4757;transform-origin:left top;'>Pending</div>
<div class='a' style='left:1327.60px;top:620.00px;font-size:11.2px;line-height:11.2px;font-weight:400;color:#222;transform:scaleX(0.9712);transform-origin:left top;'>3D</div>
<div class='a' style='left:353.50px;top:662.00px;font-size:11.2px;line-height:11.2px;font-weight:400;color:#3a4757;transform-origin:left top;'>Cups-10</div>
<div class='a' style='left:433.50px;top:662.00px;font-size:11.2px;line-height:11.2px;font-weight:400;color:#3a4757;transform:scaleX(0.9633);transform-origin:left top;'>10-PG-304-A</div>
<div class='a' style='left:1115.90px;top:662.00px;font-size:11.2px;line-height:11.2px;font-weight:400;color:#3a4757;transform-origin:left top;'>Pending</div>
<div class='a' style='left:1327.60px;top:662.00px;font-size:11.2px;line-height:11.2px;font-weight:400;color:#222;transform:scaleX(0.9712);transform-origin:left top;'>3D</div>
<div class='a' style='left:1277.40px;top:704.00px;font-size:11.2px;line-height:11.2px;font-weight:400;color:#2b3a4f;transform:scaleX(0.9827);transform-origin:left top;'>Rows per page:</div>
<div class='a' style='left:1368.50px;top:703.00px;font-size:11.2px;line-height:11.2px;font-weight:400;color:#2b3a4f;transform:scaleX(0.9556);transform-origin:left top;'>10</div>
<div class='a' style='left:1425.30px;top:704.00px;font-size:11.2px;line-height:11.2px;font-weight:400;color:#2b3a4f;transform:scaleX(1.0531);transform-origin:left top;'>1–10 of 24</div>
<div class='a' style='left:1667.00px;top:70.00px;font-size:13.6px;line-height:13.6px;font-weight:400;color:#2b3a4f;transform:scaleX(1.0206);transform-origin:left top;'>- Cups-5</div>
<div class='a' style='left:1653.00px;top:120.00px;font-size:11.2px;line-height:11.2px;font-weight:400;color:#1a1f26;letter-spacing:0.3px;transform:scaleX(0.9164);transform-origin:left top;-webkit-text-stroke:0.12px currentColor;'>OVERVIEW</div>
<div class='a' style='left:1752.20px;top:120.00px;font-size:11.2px;line-height:11.2px;font-weight:400;color:#8399b6;letter-spacing:0.3px;transform:scaleX(0.9453);transform-origin:left top;-webkit-text-stroke:0.12px currentColor;'>DETAILS</div>
<div class='a' style='left:1835.30px;top:120.00px;font-size:11.2px;line-height:11.2px;font-weight:400;color:#8399b6;letter-spacing:0.3px;transform:scaleX(0.9500);transform-origin:left top;-webkit-text-stroke:0.12px currentColor;'>COMMENTS</div>
<div class='a' style='left:1648.30px;top:173.00px;font-size:12.8px;line-height:12.8px;font-weight:700;color:#1c2b40;transform:scaleX(0.9660);transform-origin:left top;'>Information</div>
<div class='a' style='left:1648.00px;top:209.00px;font-size:11.2px;line-height:11.2px;font-weight:400;color:#2b3a4f;transform-origin:left top;'>POI ID</div>
<div class='a' style='left:1881.80px;top:209.00px;font-size:11.2px;line-height:11.2px;font-weight:700;color:#1c2430;transform-origin:left top;'>N/A</div>
<div class='a' style='left:1648.00px;top:232.00px;font-size:11.2px;line-height:11.2px;font-weight:400;color:#2b3a4f;transform-origin:left top;'>Name</div>
<div class='a' style='left:1864.40px;top:232.00px;font-size:11.2px;line-height:11.2px;font-weight:700;color:#1c2430;transform:scaleX(0.9651);transform-origin:left top;'>Cups-5</div>
<div class='a' style='left:1648.00px;top:255.00px;font-size:11.2px;line-height:11.2px;font-weight:400;color:#2b3a4f;transform-origin:left top;'>Paint Block</div>
<div class='a' style='left:1881.80px;top:255.00px;font-size:11.2px;line-height:11.2px;font-weight:700;color:#1c2430;transform-origin:left top;'>N/A</div>
<div class='a' style='left:1648.00px;top:278.00px;font-size:11.2px;line-height:11.2px;font-weight:400;color:#2b3a4f;transform-origin:left top;'>Component</div>
<div class='a' style='left:1828.00px;top:278.00px;font-size:11.2px;line-height:11.2px;font-weight:700;color:#1c2430;transform:scaleX(1.0208);transform-origin:left top;'>6-PF-2008-G4</div>
<div class='a' style='left:1648.00px;top:302.00px;font-size:11.2px;line-height:11.2px;font-weight:400;color:#2b3a4f;transform-origin:left top;'>Image Name</div>
<div class='a' style='left:1881.80px;top:302.00px;font-size:11.2px;line-height:11.2px;font-weight:700;color:#1c2430;transform-origin:left top;'>N/A</div>
<div class='a' style='left:1648.00px;top:325.00px;font-size:11.2px;line-height:11.2px;font-weight:400;color:#2b3a4f;transform-origin:left top;'>Due Date</div>
<div class='a' style='left:1833.50px;top:325.00px;font-size:11.2px;line-height:11.2px;font-weight:700;color:#1c2430;transform:scaleX(1.0638);transform-origin:left top;'>27/Mar/2024</div>
<div class='a' style='left:1648.00px;top:348.00px;font-size:11.2px;line-height:11.2px;font-weight:400;color:#2b3a4f;transform-origin:left top;'>Status</div>
<div class='a' style='left:1852.30px;top:348.00px;font-size:11.2px;line-height:11.2px;font-weight:700;color:#1c2430;transform:scaleX(0.9436);transform-origin:left top;'>In Review</div>
<div class='a' style='left:1648.00px;top:371.00px;font-size:11.2px;line-height:11.2px;font-weight:400;color:#2b3a4f;transform-origin:left top;'>Workpack No.</div>
<div class='a' style='left:1881.80px;top:371.00px;font-size:11.2px;line-height:11.2px;font-weight:700;color:#1c2430;transform-origin:left top;'>N/A</div>
<div class='a' style='left:1648.00px;top:394.00px;font-size:11.2px;line-height:11.2px;font-weight:400;color:#2b3a4f;transform-origin:left top;'>Access Control</div>
<div class='a' style='left:1869.70px;top:394.00px;font-size:11.2px;line-height:11.2px;font-weight:700;color:#1c2430;transform:scaleX(0.9322);transform-origin:left top;'>Public</div>
<div class='a' style='left:1648.00px;top:418.00px;font-size:11.2px;line-height:11.2px;font-weight:400;color:#2b3a4f;transform-origin:left top;'>Assigned To</div>
<div class='a' style='left:1874.80px;top:418.00px;font-size:11.2px;line-height:11.2px;font-weight:700;color:#1c2430;transform:scaleX(0.9368);transform-origin:left top;'>None</div>
<div class='a' style='left:1648.00px;top:441.00px;font-size:11.2px;line-height:11.2px;font-weight:400;color:#2b3a4f;transform-origin:left top;'>Created By</div>
<div class='a' style='left:1730.00px;top:441.00px;font-size:11.2px;line-height:11.2px;font-weight:700;color:#1c2430;transform:scaleX(0.9564);transform-origin:left top;'>e.kayani@abysssolutions.com.au</div>
<div class='a' style='left:1648.00px;top:464.00px;font-size:11.2px;line-height:11.2px;font-weight:400;color:#2b3a4f;transform-origin:left top;'>Comment</div>
<div class='a' style='left:1868.60px;top:464.00px;font-size:11.2px;line-height:11.2px;font-weight:700;color:#1c2430;transform:scaleX(1.0352);transform-origin:left top;'>N/A ...</div>
<div class='a' style='left:1648.00px;top:487.00px;font-size:11.2px;line-height:11.2px;font-weight:400;color:#2b3a4f;transform-origin:left top;'>Accessibility</div>
<div class='a' style='left:1868.60px;top:487.00px;font-size:11.2px;line-height:11.2px;font-weight:700;color:#1c2430;transform:scaleX(1.0352);transform-origin:left top;'>N/A ...</div>
<div class='a' style='left:1648.00px;top:510.00px;font-size:11.2px;line-height:11.2px;font-weight:400;color:#2b3a4f;transform-origin:left top;'>Date Created</div>
<div class='a' style='left:1833.50px;top:510.00px;font-size:11.2px;line-height:11.2px;font-weight:700;color:#1c2430;transform:scaleX(1.0638);transform-origin:left top;'>27/Mar/2024</div>
<div class='a' style='left:1648.00px;top:534.00px;font-size:11.2px;line-height:11.2px;font-weight:400;color:#2b3a4f;transform-origin:left top;'>POI Height from Deck</div>
<div class='a' style='left:1864.00px;top:534.00px;font-size:11.2px;line-height:11.2px;font-weight:700;color:#1c2430;transform:scaleX(1.0436);transform-origin:left top;'>63.59ft</div>
<div class='a' style='left:1648.00px;top:557.00px;font-size:11.2px;line-height:11.2px;font-weight:400;color:#2b3a4f;transform:scaleX(1.0218);transform-origin:left top;'>POI Height from Viewpoint</div>
<div class='a' style='left:1881.80px;top:557.00px;font-size:11.2px;line-height:11.2px;font-weight:700;color:#1c2430;transform-origin:left top;'>N/A</div>
<div class='a' style='left:1648.00px;top:605.00px;font-size:16px;line-height:16px;font-weight:400;color:#1f2d4a;transform:scaleX(1.0149);transform-origin:left top;'>Note</div>
<div class='a' style='left:1648.00px;top:646.00px;font-size:10.4px;line-height:10.4px;font-weight:400;color:#2b3a4f;transform:scaleX(0.9789);transform-origin:left top;'>NDT Report and 3d images are attached for reference</div>
<div class='a' style='left:1673.00px;top:678.00px;font-size:9.6px;line-height:9.6px;font-weight:700;color:#1c2430;transform:scaleX(0.9226);transform-origin:left top;'>Upload</div>
<div class='a' style='left:1648.00px;top:812.00px;font-size:10.4px;line-height:10.4px;font-weight:400;color:#2b3a4f;transform:scaleX(0.8873);transform-origin:left top;'>image__93_....</div>
<div class='a' style='left:1732.00px;top:812.00px;font-size:10.4px;line-height:10.4px;font-weight:400;color:#2b3a4f;transform:scaleX(0.8953);transform-origin:left top;'>Screenshot_...</div>
<div class='a' style='left:1820.70px;top:812.00px;font-size:10.4px;line-height:10.4px;font-weight:400;color:#2b3a4f;transform:scaleX(0.9213);transform-origin:left top;'>Test_HR_.pdf</div>
</body></html>
